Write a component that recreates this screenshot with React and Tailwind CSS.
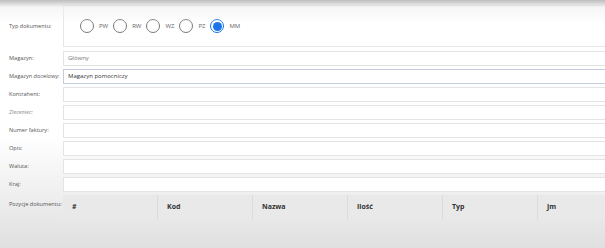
import React from "react";

const types = ["PW", "RW", "WZ", "PZ", "MM"];

const fields = [
  { label: "Magazyn:", value: "Główny", muted: true },
  { label: "Magazyn docelowy:", value: "Magazyn pomocniczy", focused: true },
  { label: "Kontrahent:" },
  { label: "Zleceniec:", italic: true },
  { label: "Numer faktury:" },
  { label: "Opis:" },
  { label: "Waluta:" },
  { label: "Kraj:" },
];

const columns = ["#", "Kod", "Nazwa", "Ilość", "Typ", "Jm"];

const Radio = ({ checked }) =>
  checked ? (
    <span className="flex h-[14px] w-[14px] items-center justify-center rounded-full border-[1.5px] border-[#1a73e8] bg-white">
      <span className="h-[9px] w-[9px] rounded-full bg-[#1a73e8]" />
    </span>
  ) : (
    <span className="h-[14px] w-[14px] rounded-full border-[1.5px] border-[#7a7a7a] bg-white" />
  );

export default function App() {
  return (
    <div
      className="relative h-[248px] w-[605px] overflow-hidden bg-gradient-to-b from-white from-55% to-[#e0e0e0] text-[#444]"
      style={{ fontFamily: '"Open Sans", "Liberation Sans", sans-serif' }}
    >
      <div className="grid grid-cols-[63px_1fr] items-center gap-y-[3px] pt-[5px]">
        <div className="whitespace-nowrap pl-[9px] text-[5.6px] text-[#555]">Typ dokumentu:</div>
        <div className="mb-[1px] flex h-[42px] items-center gap-[5px] border border-r-0 border-[#e6e6e6] bg-white pl-[16px]">
          {types.map((t) => (
            <div key={t} className="flex items-center gap-[5px]">
              <Radio checked={t === "MM"} />
              <span className="text-[6px] text-[#666]">{t}</span>
            </div>
          ))}
        </div>

        {fields.map((f) => (
          <React.Fragment key={f.label}>
            <div
              className={`whitespace-nowrap pl-[9px] text-[5.6px] text-[#555] ${f.italic ? "italic text-[#888]" : ""}`}
            >
              {f.label}
            </div>
            <div
              className={`flex h-[15px] items-center border border-r-0 bg-white pl-[4px] text-[6px] ${
                f.focused ? "border-[#c6cce0] text-[#333]" : "border-[#e4e4e4]"
              } ${f.muted ? "text-[#777]" : ""}`}
            >
              {f.value}
            </div>
          </React.Fragment>
        ))}

        <div className="self-start whitespace-nowrap pl-[9px] pt-[5px] text-[5.6px] text-[#555]">
          Pozycje dokumentu:
        </div>
        <div className="grid h-[25px] grid-cols-[95px_95px_95px_95px_95px_1fr] bg-[#e9e9e9]">
          {columns.map((c, i) => (
            <div
              key={c}
              className={`flex items-center pl-[9px] text-[7px] font-bold text-[#333] ${
                i < columns.length - 1 ? "border-r border-[#dcdcdc]" : ""
              }`}
            >
              {c}
            </div>
          ))}
        </div>
      </div>

      <div className="pointer-events-none absolute inset-x-0 top-0 h-[24px] bg-gradient-to-b from-[#bdbdbd] via-[#f0f0f0]/60 via-30% to-transparent" />
    </div>
  );
}
